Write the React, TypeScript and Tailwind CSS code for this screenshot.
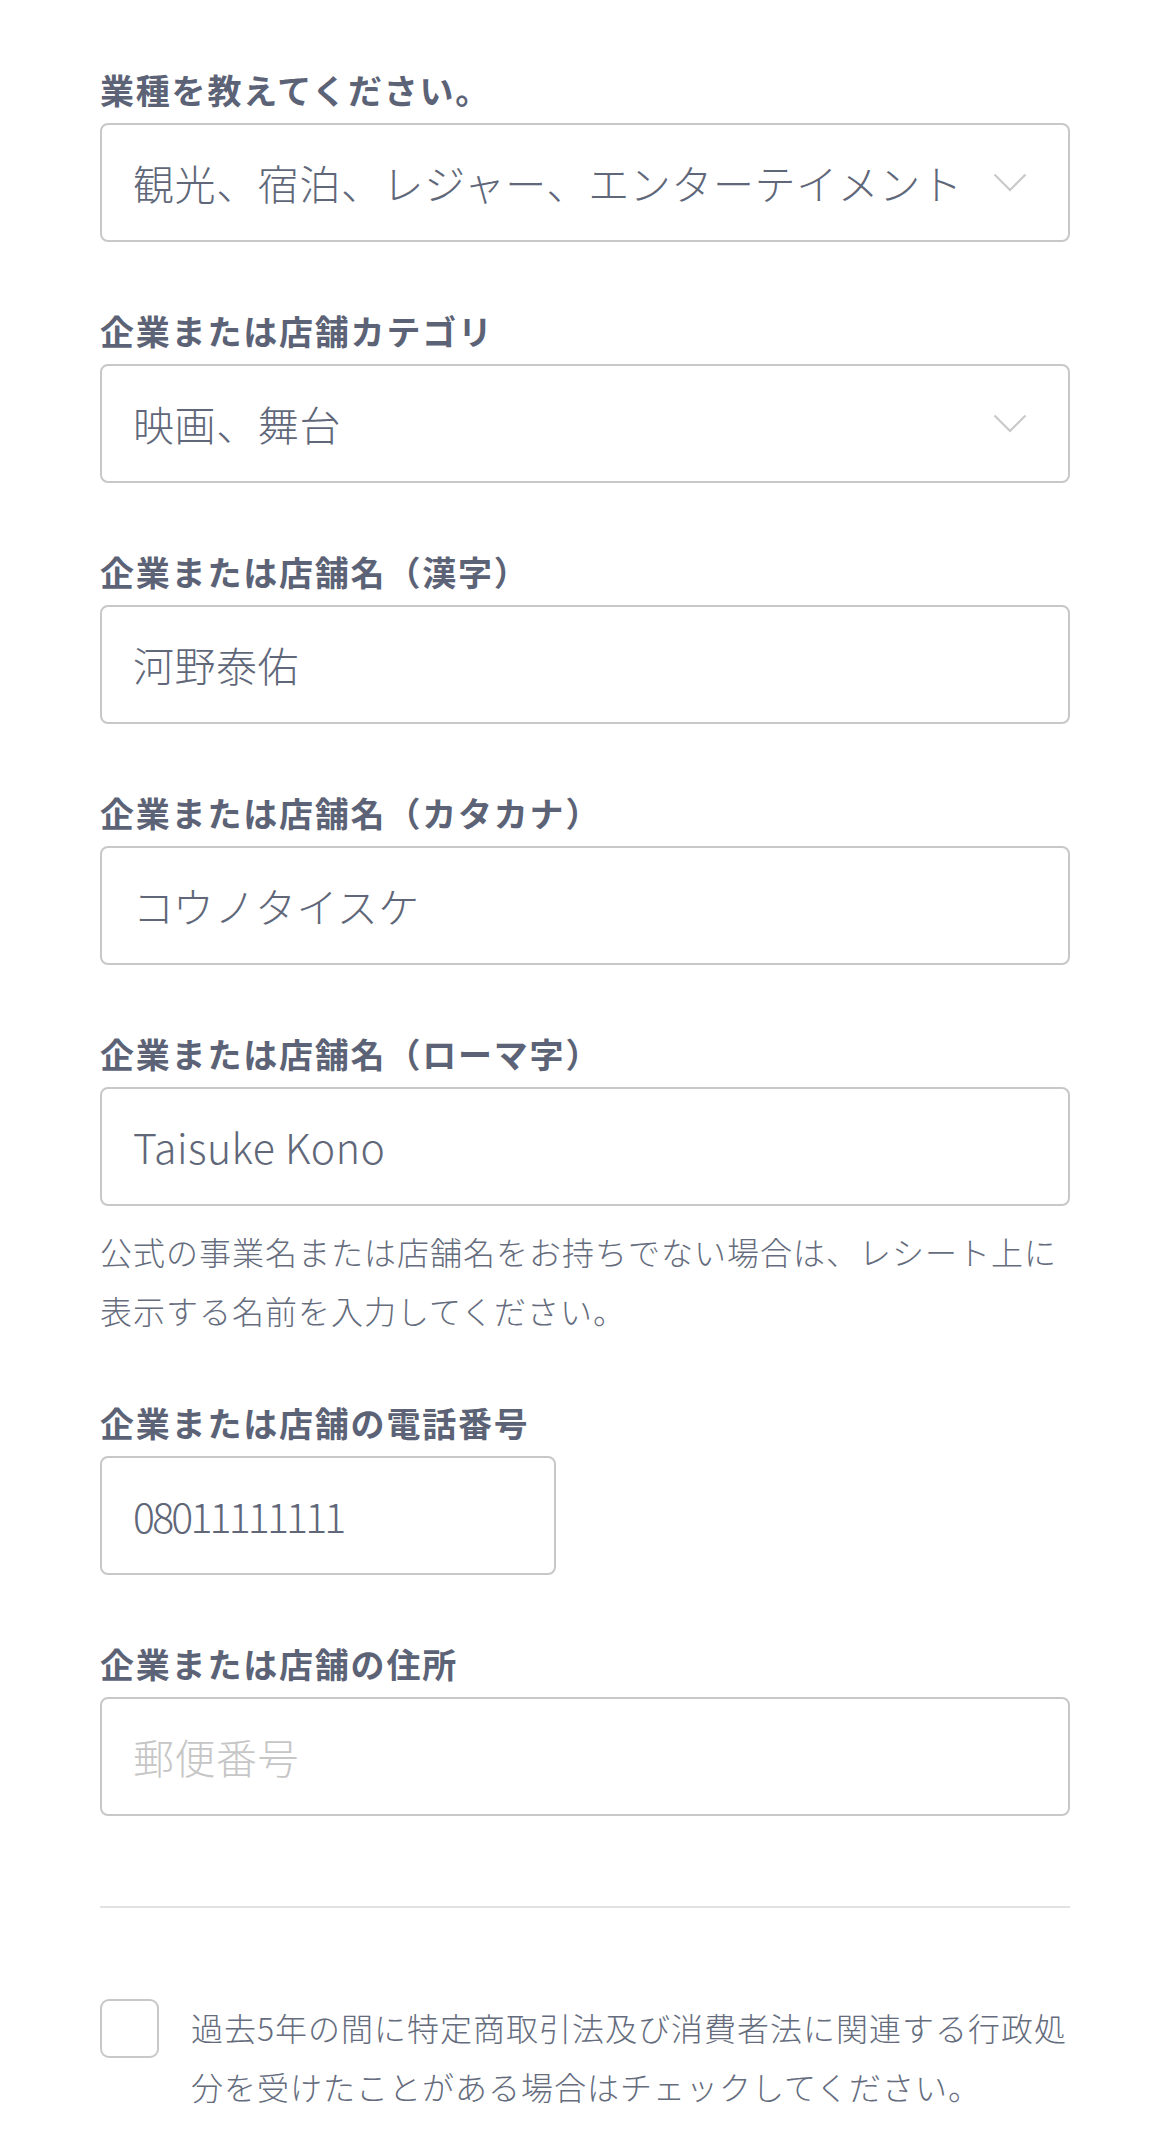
import React from "react";

const font = { fontFamily: '"Noto Sans CJK JP", "Noto Sans", sans-serif' };

function Chevron() {
  return (
    <svg width="34" height="19" viewBox="0 0 34 19" fill="none" className="shrink-0">
      <polyline points="1.5,1.5 17,17 32.5,1.5" stroke="#c9c9c9" strokeWidth="2.2" fill="none" />
    </svg>
  );
}

function Label({ children }: { children: React.ReactNode }) {
  return (
    <div className="h-[44px] leading-[44px] mb-[11px] text-[34px] font-bold text-[#5c6376] tracking-[1.8px] whitespace-nowrap">
      {children}
    </div>
  );
}

function SelectBox({ value }: { value: string }) {
  return (
    <div className="h-[119px] border-2 border-[#c8c8c8] rounded-[8px] bg-white flex items-center pl-[31px] pr-[41px]">
      <div className="flex-1 text-[41px] font-light text-[#606779] tracking-[0.6px] whitespace-nowrap overflow-hidden">{value}</div>
      <Chevron />
    </div>
  );
}

function TextBox({
  value,
  placeholder,
  narrow,
  tight,
}: {
  value?: string;
  placeholder?: string;
  narrow?: boolean;
  tight?: boolean;
}) {
  return (
    <div
      className={
        "h-[119px] border-2 border-[#c8c8c8] rounded-[8px] bg-white flex items-center pl-[31px] " +
        (narrow ? "w-[456px]" : "w-full")
      }
    >
      {value ? (
        <span
          className={
            "text-[41px] font-light text-[#606779] whitespace-nowrap " +
            (tight ? "tracking-[-2.8px]" : "tracking-[0.5px]")
          }
        >
          {value}
        </span>
      ) : (
        <span className="text-[41px] font-light text-[#c6c6c6] tracking-[0.5px] whitespace-nowrap">{placeholder}</span>
      )}
    </div>
  );
}

export default function App() {
  return (
    <div className="w-[1170px] min-h-[2147px] bg-white" style={font}>
      <div className="px-[100px] pt-[68px] pb-[29px] flex flex-col">
        <div className="mb-[67px]">
          <Label>業種を教えてください。</Label>
          <SelectBox value="観光、宿泊、レジャー、エンターテイメント" />
        </div>
        <div className="mb-[67px]">
          <Label>企業または店舗カテゴリ</Label>
          <SelectBox value="映画、舞台" />
        </div>
        <div className="mb-[67px]">
          <Label>企業または店舗名（漢字）</Label>
          <TextBox value="河野泰佑" />
        </div>
        <div className="mb-[67px]">
          <Label>企業または店舗名（カタカナ）</Label>
          <TextBox value="コウノタイスケ" />
        </div>
        <div className="mb-[61px]">
          <Label>企業または店舗名（ローマ字）</Label>
          <TextBox value="Taisuke Kono" />
          <p className="mt-[16px] text-[32px] font-light leading-[59px] tracking-[1px] text-[#656c7d]">
            公式の事業名または店舗名をお持ちでない場合は、レシート上に表示する名前を入力してください。
          </p>
        </div>
        <div className="mb-[67px]">
          <Label>企業または店舗の電話番号</Label>
          <TextBox value="08011111111" narrow tight />
        </div>
        <div>
          <Label>企業または店舗の住所</Label>
          <TextBox placeholder="郵便番号" />
        </div>
        <div className="mt-[90px] h-[2px] bg-[#e2e2e2]" />
        <div className="mt-[90px] flex items-start gap-[32px]">
          <div className="mt-[1px] w-[59px] h-[59px] shrink-0 border-2 border-[#c8c8c8] rounded-[9px] bg-white" />
          <p className="flex-1 text-[32px] font-light leading-[59px] tracking-[1px] text-[#656c7d]">
            過去5年の間に特定商取引法及び消費者法に関連する行政処分を受けたことがある場合はチェックしてください。
          </p>
        </div>
      </div>
    </div>
  );
}
